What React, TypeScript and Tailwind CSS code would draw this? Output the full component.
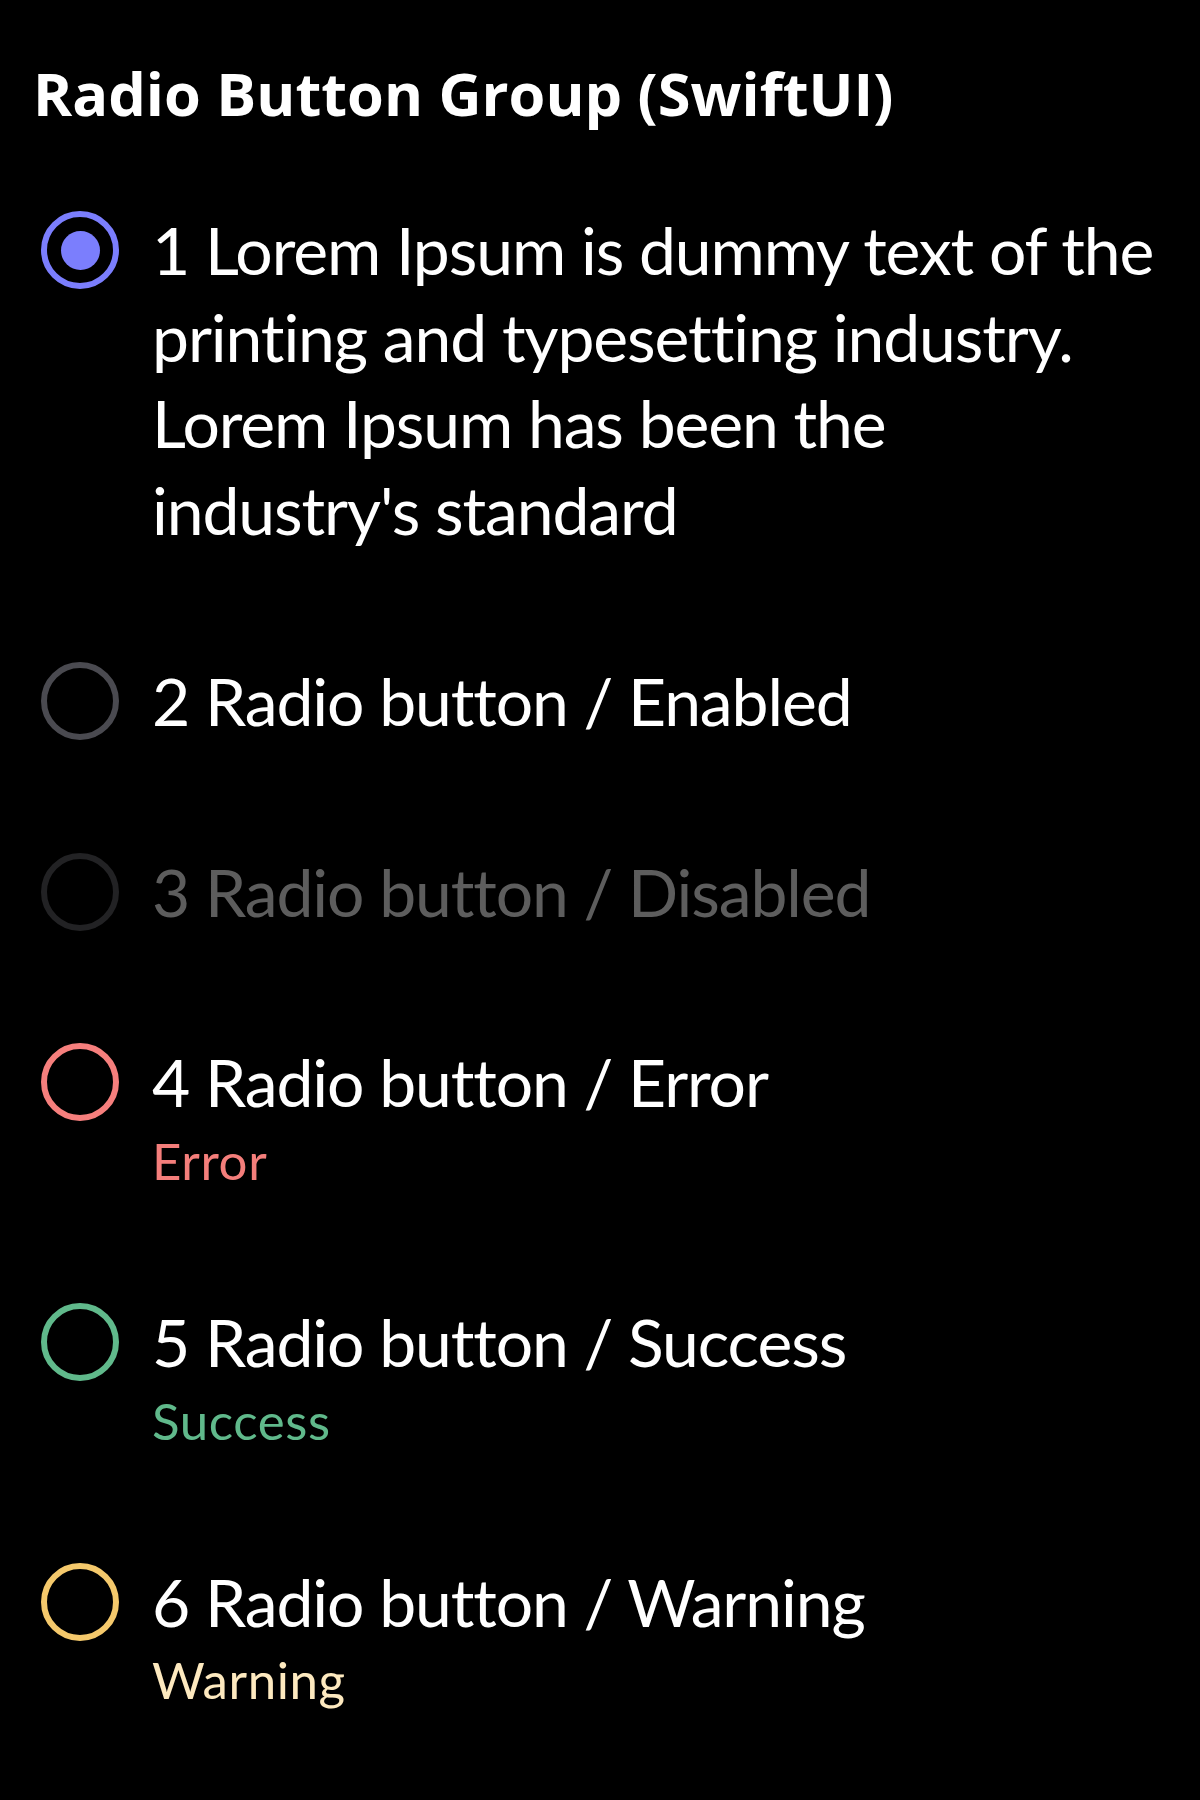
import React from "react";

type Status = "selected" | "enabled" | "disabled" | "error" | "success" | "warning";

const ring: Record<Status, string> = {
  selected: "border-[#7b7efd]",
  enabled: "border-[#4a4a50]",
  disabled: "border-[#222224]",
  error: "border-[#f67f7d]",
  success: "border-[#60b98b]",
  warning: "border-[#f5c96c]",
};

const items: { status: Status; label: string; note?: string; noteClass?: string }[] = [
  {
    status: "selected",
    label:
      "1 Lorem Ipsum is dummy text of the printing and typesetting industry. Lorem Ipsum has been the industry's standard",
  },
  { status: "enabled", label: "2 Radio button / Enabled" },
  { status: "disabled", label: "3 Radio button / Disabled" },
  { status: "error", label: "4 Radio button / Error", note: "Error", noteClass: "text-[#f47e7b]" },
  { status: "success", label: "5 Radio button / Success", note: "Success", noteClass: "text-[#60b98b]" },
  { status: "warning", label: "6 Radio button / Warning", note: "Warning", noteClass: "text-[#fde9bf]" },
];

function Radio({ status }: { status: Status }) {
  return (
    <div
      className={`mt-[4px] flex h-[78px] w-[78px] shrink-0 items-center justify-center rounded-full border-[6px] ${ring[status]}`}
    >
      {status === "selected" && <div className="h-[39px] w-[39px] rounded-full bg-[#7b7efd]" />}
    </div>
  );
}

export default function App() {
  return (
    <div
      className="min-h-[1800px] w-full bg-black pl-[33px] pr-[38px] pt-[58px] text-white [font-variant-ligatures:none]"
      style={{ fontFamily: "Lato, 'Noto Sans', sans-serif" }}
    >
      <h1
        className="whitespace-nowrap text-[59.5px] font-bold leading-[70px]"
        style={{ fontFamily: "'Open Sans', Lato, sans-serif" }}
      >
        Radio Button Group (SwiftUI)
      </h1>
      <div className="mt-[79px] flex flex-col gap-[104px] pl-[8px]">
        {items.map((it) => (
          <div key={it.label} className="flex items-start gap-[33px]">
            <Radio status={it.status} />
            <div className="flex flex-col">
              <span
                className={`text-[66px] leading-[86.7px] tracking-[-1.1px] ${
                  it.status === "disabled" ? "text-[#5d5d5d]" : "text-white"
                }`}
              >
                {it.label}
              </span>
              {it.note && (
                <span className={`text-[51px] leading-[69px] tracking-[0.6px] ${it.noteClass}`}>
                  {it.note}
                </span>
              )}
            </div>
          </div>
        ))}
      </div>
    </div>
  );
}
